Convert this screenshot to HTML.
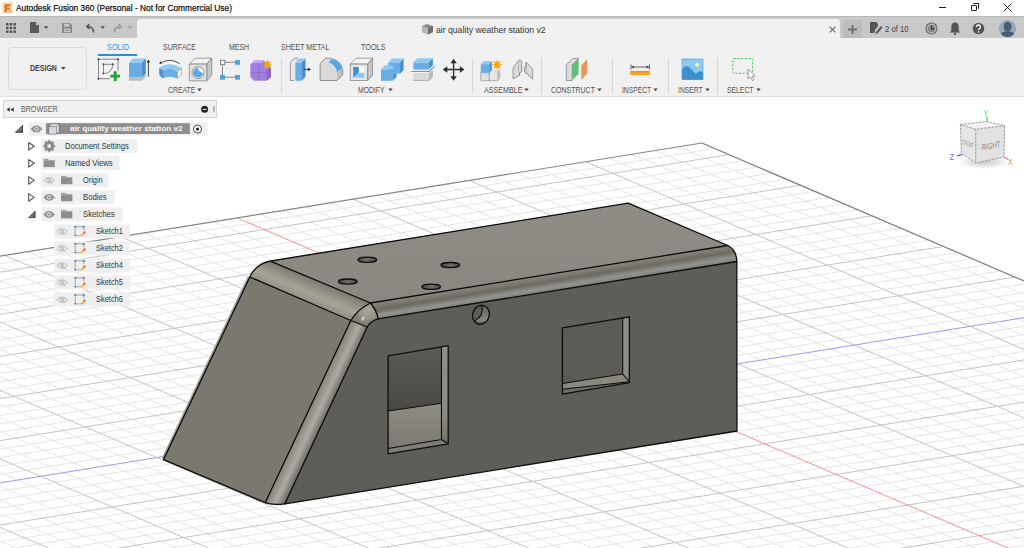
<!DOCTYPE html>
<html><head><meta charset="utf-8">
<style>
*{margin:0;padding:0;box-sizing:border-box}
html,body{width:1024px;height:548px;overflow:hidden;background:#fff;font-family:"Liberation Sans",sans-serif}
.a{position:absolute}
#title{left:0;top:0;width:1024px;height:16px;background:#fff}
#tabbar{left:0;top:16px;width:1024px;height:22px;background:#c9c9c9;border-top:1px solid #b8b8b8}
#toolbar{left:0;top:38px;width:1024px;height:59px;background:#f1f1f1;border-bottom:1px solid #dedede}
#vp{left:0;top:97px;width:1024px;height:451px;overflow:hidden;background:#fff}
.t{white-space:nowrap;color:#3c3c3c}
.tab{font-size:8px;color:#555;letter-spacing:-0.2px}
.grp{font-size:8px;color:#555;letter-spacing:-0.15px}
.sep{width:1px;height:36px;top:58px;background:#d8d8d8}
.mi line{stroke:#e6e6e6;stroke-width:1}
.ma line{stroke:#c4c4c4;stroke-width:1}
.bd line{stroke:#858585;stroke-width:1.2}
.br{font-size:7.6px;color:#3a3a3a}

.tx{white-space:nowrap;transform-origin:0 0}
.bold1{-webkit-text-stroke:0.25px currentColor}
</style></head><body>
<!-- title bar -->
<div id="title" class="a">
  <svg class="a" style="left:1px;top:2px" width="13" height="12"><rect x="0.8" y="0.2" width="11" height="11" fill="#fbe3c8"/><rect x="1.5" y="1" width="9.5" height="9.5" fill="#f6cf9f" opacity="0.6"/><path d="M3.6 2.2H9.6V4.2H5.9V5.6H8.9V7.5H5.9V10.3H3.6Z" fill="#d8731a"/><rect x="7.6" y="8.6" width="3" height="1.8" fill="#f0a55a"/></svg>
  <div class="a" style="left:939px;top:7px;width:7px;height:1px;background:#222"></div>
  <div class="a" style="left:971px;top:5px;width:6px;height:6px;border:1px solid #222;border-radius:1px;background:#fff"></div>
  <div class="a" style="left:973px;top:3px;width:6px;height:6px;border-top:1px solid #222;border-right:1px solid #222;border-radius:1px"></div>
  <svg class="a" style="left:1003px;top:3px" width="9" height="9"><path d="M0.5 0.5L8.5 8.5M8.5 0.5L0.5 8.5" stroke="#222" stroke-width="1"/></svg>
</div>
<!-- tab bar -->
<div id="tabbar" class="a">
  <svg class="a" style="left:6px;top:6px" width="10" height="10"><g fill="#555"><rect x="0" y="0" width="2.5" height="2.5"/><rect x="3.7" y="0" width="2.5" height="2.5"/><rect x="7.4" y="0" width="2.5" height="2.5"/><rect x="0" y="3.7" width="2.5" height="2.5"/><rect x="3.7" y="3.7" width="2.5" height="2.5"/><rect x="7.4" y="3.7" width="2.5" height="2.5"/><rect x="0" y="7.4" width="2.5" height="2.5"/><rect x="3.7" y="7.4" width="2.5" height="2.5"/><rect x="7.4" y="7.4" width="2.5" height="2.5"/></g></svg>
  <svg class="a" style="left:30px;top:5px" width="18" height="12"><path d="M0 0H6L9 3V11H0Z" fill="#5a5a5a"/><path d="M6 0V3H9Z" fill="#c9c9c9"/><path d="M13.8 4.3H18.3L16.05 7Z" fill="#555"/></svg>
  <svg class="a" style="left:62px;top:6px" width="10" height="10"><path d="M0 0H8L10 2V10H0Z" fill="#8a8a8a"/><rect x="2.2" y="0.8" width="5" height="2.8" fill="#c9c9c9"/><rect x="2" y="5.6" width="6" height="3.6" fill="#c9c9c9"/><rect x="3.2" y="6.8" width="3.6" height="1.2" fill="#8a8a8a"/></svg>
  <svg class="a" style="left:85px;top:5px" width="22" height="12"><path d="M8.5 10.5C8.5 6 6 4.5 2.5 4.5M4.5 2L1.8 4.5L4.5 7" fill="none" stroke="#555" stroke-width="1.5"/><path d="M15.5 4.3H20L17.75 7Z" fill="#555"/></svg>
  <svg class="a" style="left:113px;top:5px" width="22" height="12"><path d="M1.5 10.5C1.5 6 4 4.5 7.5 4.5M5.5 2L8.2 4.5L5.5 7" fill="none" stroke="#999" stroke-width="1.5"/><path d="M14.8 4.3H19.3L17.05 7Z" fill="#999"/></svg>
  <div class="a" style="left:137px;top:2px;width:703px;height:20px;background:#f1f1f1;border-radius:3px 3px 0 0"></div>
  <svg class="a" style="left:421px;top:7px" width="13" height="11"><path d="M1 2L6 0L12 2V8L7 10.5L1 8Z" fill="#8a8a8a"/><path d="M1 2L7 4V10.5L1 8Z" fill="#b5b5b5"/><path d="M7 4L12 2V8L7 10.5Z" fill="#6f6f6f"/></svg>
  <svg class="a" style="left:829px;top:9px" width="7" height="7"><path d="M0.6 0.6L6.4 6.4M6.4 0.6L0.6 6.4" stroke="#666" stroke-width="1.1"/></svg>
  <div class="a" style="left:843px;top:3px;width:19px;height:19px;background:#bdbdbd;border-radius:2px 2px 0 0"></div>
  <svg class="a" style="left:848px;top:8px" width="9" height="9"><path d="M4.5 0V9M0 4.5H9" stroke="#6e6e6e" stroke-width="1.9"/></svg>
  <svg class="a" style="left:870px;top:5px" width="13" height="13"><path d="M0 0H6L8 2V4L5 8L4.5 11H0Z" fill="#555"/><path d="M6 10L11 4L12.5 5.5L7.5 11.5L5.5 12Z" fill="#555"/></svg>
  <svg class="a" style="left:925px;top:5px" width="13" height="13"><circle cx="6.5" cy="6.5" r="6" fill="#5e5e5e"/><circle cx="6.5" cy="6.5" r="4.5" fill="#8a8a8a" stroke="#dcdcdc" stroke-width="0.9"/><path d="M6.5 3.4V6.9H9.3" fill="none" stroke="#333" stroke-width="1.2"/></svg>
  <svg class="a" style="left:949px;top:5px" width="12" height="13"><path d="M6 0.5C3.5 0.5 2.3 2.5 2.3 5V8.5L0.8 10.5H11.2L9.7 8.5V5C9.7 2.5 8.5 0.5 6 0.5Z" fill="#555"/><circle cx="6" cy="11.8" r="1.2" fill="#555"/></svg>
  <svg class="a" style="left:972px;top:5px" width="13" height="13"><circle cx="6.5" cy="6.5" r="5.8" fill="#555"/><path d="M4.5 5C4.5 3.6 5.4 3 6.5 3S8.5 3.6 8.5 5C8.5 6.3 6.6 6.5 6.6 8" fill="none" stroke="#fff" stroke-width="1.3"/><circle cx="6.6" cy="9.9" r="0.8" fill="#fff"/></svg>
  <svg class="a" style="left:998px;top:2px" width="19" height="19"><defs><clipPath id="av"><circle cx="9.5" cy="9.5" r="8.6"/></clipPath></defs><circle cx="9.5" cy="9.5" r="8.6" fill="#94a8bf"/><g clip-path="url(#av)" fill="#4c5b6e"><ellipse cx="9.6" cy="7.6" rx="4" ry="4.9"/><path d="M1.5 19.5C1.5 14 5 12.3 9.6 12.3S17.7 14 17.7 19.5Z"/></g></svg>
</div>
<!-- toolbar -->
<div id="toolbar" class="a">
  <div class="a" style="left:8px;top:8.6px;width:79px;height:43.3px;border:1px solid #dcdcdc;border-radius:4px;background:#f1f1f1"></div>
  <svg class="a" style="left:60.5px;top:29.2px" width="6" height="4"><path d="M0 0H4.6L2.3 2.8Z" fill="#444"/></svg>
  <div class="a" style="left:98px;top:16px;width:39px;height:2px;background:#1e96d6"></div>
  <svg class="a" style="left:0;top:0" width="1024" height="59" viewBox="0 38 1024 59">
<!-- create sketch -->
<g>
<path d="M98.5 59.2H118M98.5 59.2V78.7H110M118 59.2V70.5" fill="none" stroke="#5a5a5a" stroke-width="0.7"/>
<g fill="#3a3a3a"><circle cx="98.5" cy="59.2" r="1"/><circle cx="118" cy="59.2" r="1"/><circle cx="98.5" cy="78.7" r="1"/><circle cx="103.5" cy="64.3" r="1"/><circle cx="112.9" cy="64.3" r="1"/><circle cx="103.5" cy="73.6" r="1"/></g>
<path d="M103.5 64.3H112.9M103.5 64.3V73.6M112.9 64.3Q112.5 72 105 73.6" fill="none" stroke="#5a5a5a" stroke-width="0.7"/>
<path d="M115.2 71.2V81M110.3 76.1H120.1" stroke="#1fa33a" stroke-width="2.9"/>
</g>
<!-- extrude -->
<g>
<path d="M129 77.3H141.9L145.8 73.2V76.8L141.9 80.8H129Z" fill="#bdbdbd"/>
<path d="M129 62.6H141.9V77.3H129Z" fill="#69ade4"/>
<path d="M129 62.6L133.1 58.4H145.8L141.9 62.6Z" fill="#8fcaf4"/>
<path d="M141.9 62.6L145.8 58.4V73.2L141.9 77.3Z" fill="#4a90d0"/>
<path d="M148.4 76.7V61.5" stroke="#333" stroke-width="0.9"/><path d="M146.4 62.5L148.4 59.5L150.4 62.5Z" fill="#333"/>
</g>
<!-- revolve -->
<g>
<path d="M160.5 63.2Q170 57 179.9 63.8" fill="none" stroke="#444" stroke-width="0.9"/><path d="M159.3 64L160.2 61.3L162.3 63.2Z" fill="#333"/>
<path d="M159.1 67.9Q169.6 60.5 181.4 68.2L177.3 71.7Q170 66.5 163.8 70.8Z" fill="#8ccaf6"/>
<path d="M163.8 70.8Q170 66.5 177.3 71.7V78.4Q170 75 162.6 78.4Z" fill="#69ade4"/>
<path d="M159.1 67.9L163.8 70.8L162.6 78.4L159.3 75Z" fill="#4a90d0"/>
<path d="M177.3 71.7L181.4 68.2V75L177.3 78.4Z" fill="#fff" stroke="#777" stroke-width="0.6"/>
</g>
<!-- hole -->
<g stroke="#7a7a7a" stroke-width="0.7">
<path d="M189.3 64.1L195.4 58.2H211.8L206.8 64.1Z" fill="#f4f4f4"/>
<path d="M206.8 64.1L211.8 58.2V74.9L206.8 80.8Z" fill="#c9c9c9"/>
<path d="M189.3 64.1H206.8V80.8H189.3Z" fill="#e2e2e2"/>
<circle cx="198.1" cy="72.5" r="6.1" fill="#ececec" stroke="#8a8a8a" stroke-width="0.8"/>
<circle cx="198.1" cy="72.5" r="5.1" fill="#62a8e4" stroke="none"/>
<path d="M197.6 67.4Q199.5 72.5 203.1 72.9Q203.4 68.2 197.6 67.4Z" fill="#fff" stroke="none"/>
</g>
<!-- pattern -->
<g>
<path d="M225 62.3H235M222.4 64.7V75M225 77.2H235" stroke="#777" stroke-width="0.9"/>
<rect x="220.4" y="60.3" width="4.4" height="4.4" fill="#fff" stroke="#666" stroke-width="0.8"/>
<rect x="235" y="60" width="5" height="4.8" fill="#4da3e0"/>
<rect x="220" y="74.9" width="5" height="4.8" fill="#4da3e0"/>
<rect x="235" y="74.9" width="5" height="4.8" fill="#4da3e0"/>
</g>
<!-- form -->
<g>
<path d="M254 60.5H264L270 66V78L266.5 80.8H254L250.3 77V64.5Z" fill="#a27ee0"/>
<path d="M254 60.5H264L262 63H253L250.3 64.5Z" fill="#c6a8f5"/>
<path d="M266.5 66L271 67V77L266.5 80.8Z" fill="#8a64cc"/>
<path d="M258.5 63V80.8M250.5 72.5H266.5" stroke="#8a66c8" stroke-width="0.6"/>
<path d="M267.4 58.8L268.3 62.3L271.6 61.1L269.5 63.9L272.8 64.9L269.5 65.9L271.4 68.8L268.3 67.5L267.4 70.6L266.5 67.5L263.4 68.8L265.3 65.9L262 64.9L265.3 63.9L263.2 61.1L266.5 62.3Z" fill="#f5a50a"/>
</g>
<!-- press pull -->
<g>
<path d="M290.3 80.5V62.6L294.4 58.2H298L295.3 62.6V80.5Z" fill="#e8e8e8"/>
<path d="M293.8 80.5H290.3V62.6L294.4 58.2H297.9" fill="none" stroke="#6a6a6a" stroke-width="0.7"/>
<path d="M295.3 62.6H301.4V80.8H295.3Z" fill="#69ade4"/>
<path d="M295.3 62.6L298.5 58.5H305.5L301.4 62.6Z" fill="#8fcaf4"/>
<path d="M301.4 62.6L305.5 58.5V76.7L301.4 80.8Z" fill="#4a90d0"/>
<path d="M303.7 69.4H308.5" stroke="#222" stroke-width="0.9"/><path d="M308 67.5L310.8 69.4L308 71.3Z" fill="#222"/>
</g>
<!-- fillet -->
<g>
<path d="M320.1 80.5V63.8L325.4 58.2H331.3Q340 60 342.7 67.6V74.9L337.1 80.5Z" fill="#dadada"/>
<path d="M337.1 80.5L342.7 74.9V69L337.1 72Z" fill="#c2c2c2"/>
<path d="M328.6 62.6L331.9 58.3Q340.5 61 342.7 68L337.1 72Q335 64 328.6 62.6Z" fill="#5aa6e4"/>
<path d="M331.3 58.2H325.4L320.1 63.8V80.5H337.1L342.7 74.9V69" fill="none" stroke="#6a6a6a" stroke-width="0.7"/>
</g>
<!-- shell -->
<g stroke="#7a7a7a" stroke-width="0.7">
<path d="M350.3 64.1L356.1 58.2H372.5L367.6 64.1Z" fill="#f6f6f6"/>
<path d="M367.6 64.1L372.5 58.2V75.2L367.6 80.5Z" fill="#c8c8c8"/>
<path d="M350.3 64.1H367.6V80.5H350.3Z" fill="#e6e6e6"/>
<path d="M353.2 67H364.3V77.8H353.2Z" fill="#fafafa" stroke="none"/>
<path d="M353.2 67H358.8V72.7L353.2 77.8Z" fill="#3f8fd0" stroke="none"/>
<path d="M358.8 72.7H364.3V77.8H353.2Z" fill="#8cc8f4" stroke="none"/>
</g>
<!-- combine -->
<g>
<path d="M388.3 62.5L392 58.5H403.6L400 62.5Z" fill="#8fcaf4"/>
<path d="M388.3 62.5H400V73.7H388.3Z" fill="#69ade4"/>
<path d="M400 62.5L403.6 58.5V70L400 73.7Z" fill="#4a90d0"/>
<path d="M381 69.5L384.5 65.3H393L392.8 69.5Z" fill="#8fcaf4"/>
<path d="M381 69.5H392.8V80.8H381Z" fill="#69ade4"/>
<path d="M392.8 73.7H396.6V77L392.8 80.8Z" fill="#4a90d0"/>
<path d="M388.3 69.5H396.6V73.7H388.3Z" fill="#69ade4"/>
</g>
<!-- split -->
<g>
<path d="M413.3 62.6L417.4 58.2H432.9L428.5 62.6Z" fill="#8fcaf4"/>
<path d="M413.3 62.6H428.5V69.6H413.3Z" fill="#69ade4"/>
<path d="M428.5 62.6L432.9 58.2V65.2L428.5 69.6Z" fill="#4a90d0"/>
<path d="M411.3 71.5H429.1L434.8 66.1" fill="none" stroke="#4da3e0" stroke-width="1.1"/>
<path d="M413.3 73.1H428.8V80.4H413.3Z" fill="#d9d9d9"/>
<path d="M428.8 73.1L432.9 70V76.6L428.8 80.4Z" fill="#bbbbbb"/>
<path d="M413.3 80.4H428.8L432.9 76.6" fill="none" stroke="#999" stroke-width="0.8"/>
</g>
<!-- move -->
<g fill="#2b2b2b">
<path d="M444.5 69.5H462.7M453.6 60.5V78.8" stroke="#2b2b2b" stroke-width="1.3"/>
<path d="M453.6 58.8L456.8 63.3H450.4Z"/><path d="M453.6 80.7L456.8 76.2H450.4Z"/>
<path d="M442.8 69.5L447.3 66.3V72.7Z"/><path d="M464.4 69.5L459.9 66.3V72.7Z"/>
</g>
<!-- new component -->
<g>
<path d="M480.7 72.8H489.3V80.7H480.7Z" fill="#e0e0e0" stroke="#8a8a8a" stroke-width="0.6"/>
<path d="M489.3 72.8V70.6H497.9V80.7H489.3Z" fill="#e6e6e6" stroke="#8a8a8a" stroke-width="0.6"/>
<path d="M489.3 70.6L491.8 68.6H500.5L497.9 70.6Z" fill="#f2f2f2"/>
<path d="M497.9 70.6L500.5 68.6V78L497.9 80.7Z" fill="#c3c3c3"/>
<path d="M480.7 64.2L483.6 61H491.8L489.3 64.2Z" fill="#8fcaf4"/>
<path d="M480.7 64.2H489.3V72.8H480.7Z" fill="#69ade4"/>
<path d="M489.3 64.2L491.8 61V69.9L489.3 72.8Z" fill="#4a90d0"/>
<path d="M497.2 58.7L498.1 62.2L501.4 61L499.3 63.8L502.6 64.8L499.3 65.8L501.2 68.7L498.1 67.4L497.2 70.5L496.3 67.4L493.2 68.7L495.1 65.8L491.8 64.8L495.1 63.8L493 61L496.3 62.2Z" fill="#f5a50a"/>
</g>
<!-- joint -->
<g stroke="#7a7a7a" stroke-width="0.7" fill="#dadada">
<path d="M513 68L518.5 60.5Q521 59.5 521.6 61V72L519.5 73V75.5L513 79Z"/>
<path d="M518.5 61.5V72.5" stroke="#aaa"/>
<path d="M526 62L532.7 69V79.2L528 75V74L524.3 72V67.5L526 66Z"/>
<path d="M526 62V74.5" stroke="#aaa"/>
<path d="M519.6 72.5V76" stroke="#4da3e0" stroke-width="0.9"/><path d="M525.8 65V68" stroke="#4da3e0" stroke-width="0.9"/>
</g>
<!-- construct -->
<g>
<path d="M566.3 80.5V64.9L572.7 58.4H578.6L572.2 64.9V80.5Z" fill="#dcdcdc" stroke="#777" stroke-width="0.7"/>
<path d="M572.2 64.9L578.6 59V74L572.2 79.9Z" fill="#5cbf7a"/>
<path d="M581.3 65.4L587.2 59V73.5L581.3 79.9Z" fill="#e8955a"/>
</g>
<!-- inspect -->
<g>
<path d="M631 64.4V69.7M649.5 64.4V69.7M631.5 67H649" stroke="#444" stroke-width="0.8"/>
<path d="M631.3 67L634 65.6V68.4Z" fill="#444"/><path d="M649.2 67L646.5 65.6V68.4Z" fill="#444"/>
<rect x="630.2" y="71.1" width="19.9" height="4" fill="#f5a623"/>
<path d="M632 71.1V72.5M634 71.1V72.2M636 71.1V72.5M638 71.1V72.2M640 71.1V72.5M642 71.1V72.2M644 71.1V72.5M646 71.1V72.2M648 71.1V72.5" stroke="#8a5a10" stroke-width="0.5"/>
</g>
<!-- insert -->
<g>
<rect x="682" y="59" width="21" height="20.7" fill="#8ccaf6"/>
<path d="M682 79.7V70Q685.5 64 689 67Q693 71 696 74Q699 69.5 703 72.5V79.7Z" fill="#3d8fcc"/>
<circle cx="697" cy="64.7" r="2" fill="#fff6b0"/>
<rect x="682" y="59" width="21" height="20.7" fill="none" stroke="#4a9ad8" stroke-width="0.6"/>
</g>
<!-- select -->
<g>
<rect x="732.8" y="58.5" width="19.8" height="14.8" fill="none" stroke="#4cc469" stroke-width="1" stroke-dasharray="2.2 1.5" rx="0.8"/>
<path d="M748 69L748 79L750.5 76.8L752.5 80.6L754 79.8L752.2 76.2L755.2 76Z" fill="#fff" stroke="#777" stroke-width="0.7"/>
</g>
</svg>

  <svg class="a" style="left:0;top:0" width="1024" height="59"><g fill="#444"><path d="M197.3 50.5h4.4l-2.2 2.8z"/><path d="M388.3 50.5h4.4l-2.2 2.8z"/><path d="M524.3 50.5h4.4l-2.2 2.8z"/><path d="M597.3 50.5h4.4l-2.2 2.8z"/><path d="M653.3 50.5h4.4l-2.2 2.8z"/><path d="M705.3 50.5h4.4l-2.2 2.8z"/><path d="M756.3 50.5h4.4l-2.2 2.8z"/></g></svg>
  <div class="a sep" style="left:281px;top:20px"></div>
  <div class="a sep" style="left:472px;top:20px"></div>
  <div class="a sep" style="left:541px;top:20px"></div>
  <div class="a sep" style="left:612px;top:20px"></div>
  <div class="a sep" style="left:668px;top:20px"></div>
  <div class="a sep" style="left:717px;top:20px"></div>
</div>
<!-- viewport -->
<div id="vp" class="a">
<svg class="a" style="left:0;top:-97px" width="1024" height="548" viewBox="0 0 1024 548">
<g class="mi"><line x1="714.7" y1="148.5" x2="-795.9" y2="392.1"/><line x1="743.3" y1="160.7" x2="-767.3" y2="404.3"/><line x1="757.6" y1="166.8" x2="-753.0" y2="410.5"/><line x1="771.9" y1="173.0" x2="-738.7" y2="416.6"/><line x1="786.2" y1="179.1" x2="-724.4" y2="422.7"/><line x1="814.8" y1="191.3" x2="-695.8" y2="434.9"/><line x1="829.1" y1="197.4" x2="-681.5" y2="441.1"/><line x1="843.4" y1="203.6" x2="-667.2" y2="447.2"/><line x1="857.7" y1="209.7" x2="-652.9" y2="453.3"/><line x1="886.3" y1="221.9" x2="-624.3" y2="465.6"/><line x1="900.6" y1="228.1" x2="-610.0" y2="471.7"/><line x1="914.9" y1="234.2" x2="-595.7" y2="477.8"/><line x1="929.2" y1="240.3" x2="-581.4" y2="483.9"/><line x1="957.8" y1="252.5" x2="-552.8" y2="496.2"/><line x1="972.1" y1="258.7" x2="-538.5" y2="502.3"/><line x1="986.4" y1="264.8" x2="-524.2" y2="508.4"/><line x1="1000.7" y1="270.9" x2="-509.9" y2="514.5"/><line x1="1029.3" y1="283.2" x2="-481.3" y2="526.8"/><line x1="1043.6" y1="289.3" x2="-467.0" y2="532.9"/><line x1="1057.9" y1="295.4" x2="-452.7" y2="539.0"/><line x1="1072.2" y1="301.5" x2="-438.4" y2="545.1"/><line x1="1100.8" y1="313.8" x2="-409.8" y2="557.4"/><line x1="1115.1" y1="319.9" x2="-395.5" y2="563.5"/><line x1="1129.4" y1="326.0" x2="-381.2" y2="569.6"/><line x1="1143.7" y1="332.1" x2="-366.9" y2="575.7"/><line x1="1172.3" y1="344.4" x2="-338.3" y2="588.0"/><line x1="1186.6" y1="350.5" x2="-324.0" y2="594.1"/><line x1="1200.9" y1="356.6" x2="-309.7" y2="600.2"/><line x1="1215.2" y1="362.7" x2="-295.4" y2="606.4"/><line x1="1243.8" y1="375.0" x2="-266.8" y2="618.6"/><line x1="1258.1" y1="381.1" x2="-252.5" y2="624.7"/><line x1="1272.4" y1="387.2" x2="-238.2" y2="630.8"/><line x1="1286.7" y1="393.3" x2="-223.9" y2="637.0"/><line x1="1315.3" y1="405.6" x2="-195.3" y2="649.2"/><line x1="1329.6" y1="411.7" x2="-181.0" y2="655.3"/><line x1="1343.9" y1="417.8" x2="-166.7" y2="661.5"/><line x1="1358.2" y1="424.0" x2="-152.4" y2="667.6"/><line x1="1386.8" y1="436.2" x2="-123.8" y2="679.8"/><line x1="1401.1" y1="442.3" x2="-109.5" y2="685.9"/><line x1="1415.4" y1="448.4" x2="-95.2" y2="692.1"/><line x1="1429.7" y1="454.6" x2="-80.9" y2="698.2"/><line x1="1458.3" y1="466.8" x2="-52.3" y2="710.4"/><line x1="1472.6" y1="472.9" x2="-38.0" y2="716.6"/><line x1="1486.9" y1="479.1" x2="-23.7" y2="722.7"/><line x1="1501.2" y1="485.2" x2="-9.4" y2="728.8"/><line x1="1529.8" y1="497.4" x2="19.2" y2="741.0"/><line x1="1544.1" y1="503.5" x2="33.5" y2="747.2"/><line x1="1558.4" y1="509.7" x2="47.8" y2="753.3"/><line x1="1572.7" y1="515.8" x2="62.1" y2="759.4"/><line x1="1601.3" y1="528.0" x2="90.7" y2="771.7"/><line x1="1615.6" y1="534.2" x2="105.0" y2="777.8"/><line x1="1629.9" y1="540.3" x2="119.3" y2="783.9"/><line x1="1644.2" y1="546.4" x2="133.6" y2="790.0"/><line x1="1672.8" y1="558.6" x2="162.2" y2="802.3"/><line x1="1687.1" y1="564.8" x2="176.5" y2="808.4"/><line x1="1701.4" y1="570.9" x2="190.8" y2="814.5"/><line x1="1715.7" y1="577.0" x2="205.1" y2="820.6"/><line x1="678.6" y1="146.7" x2="1706.8" y2="586.9"/><line x1="655.4" y1="150.5" x2="1683.5" y2="590.6"/><line x1="632.1" y1="154.2" x2="1660.3" y2="594.4"/><line x1="608.9" y1="158.0" x2="1637.0" y2="598.1"/><line x1="562.4" y1="165.4" x2="1590.6" y2="605.6"/><line x1="539.2" y1="169.2" x2="1567.3" y2="609.4"/><line x1="515.9" y1="172.9" x2="1544.1" y2="613.1"/><line x1="492.7" y1="176.7" x2="1520.8" y2="616.9"/><line x1="446.2" y1="184.2" x2="1474.4" y2="624.4"/><line x1="423.0" y1="187.9" x2="1451.1" y2="628.1"/><line x1="399.7" y1="191.7" x2="1427.9" y2="631.9"/><line x1="376.5" y1="195.4" x2="1404.6" y2="635.6"/><line x1="330.0" y1="202.9" x2="1358.2" y2="643.1"/><line x1="306.8" y1="206.7" x2="1334.9" y2="646.8"/><line x1="283.5" y1="210.4" x2="1311.7" y2="650.6"/><line x1="260.3" y1="214.2" x2="1288.4" y2="654.3"/><line x1="213.8" y1="221.7" x2="1242.0" y2="661.8"/><line x1="190.6" y1="225.4" x2="1218.7" y2="665.6"/><line x1="167.3" y1="229.2" x2="1195.5" y2="669.3"/><line x1="144.1" y1="232.9" x2="1172.2" y2="673.1"/><line x1="97.6" y1="240.4" x2="1125.8" y2="680.6"/><line x1="74.4" y1="244.2" x2="1102.5" y2="684.3"/><line x1="51.1" y1="247.9" x2="1079.3" y2="688.1"/><line x1="27.9" y1="251.7" x2="1056.0" y2="691.8"/><line x1="-18.6" y1="259.1" x2="1009.6" y2="699.3"/><line x1="-41.8" y1="262.9" x2="986.3" y2="703.1"/><line x1="-65.1" y1="266.6" x2="963.1" y2="706.8"/><line x1="-88.3" y1="270.4" x2="939.8" y2="710.6"/><line x1="-134.8" y1="277.9" x2="893.4" y2="718.1"/><line x1="-158.0" y1="281.6" x2="870.1" y2="721.8"/><line x1="-181.3" y1="285.4" x2="846.9" y2="725.6"/><line x1="-204.5" y1="289.1" x2="823.6" y2="729.3"/><line x1="-251.0" y1="296.6" x2="777.2" y2="736.8"/><line x1="-274.2" y1="300.4" x2="753.9" y2="740.5"/><line x1="-297.5" y1="304.1" x2="730.7" y2="744.3"/><line x1="-320.7" y1="307.9" x2="707.4" y2="748.0"/><line x1="-367.2" y1="315.4" x2="661.0" y2="755.5"/><line x1="-390.4" y1="319.1" x2="637.7" y2="759.3"/><line x1="-413.7" y1="322.9" x2="614.5" y2="763.0"/><line x1="-436.9" y1="326.6" x2="591.2" y2="766.8"/><line x1="-483.4" y1="334.1" x2="544.8" y2="774.3"/><line x1="-506.7" y1="337.9" x2="521.5" y2="778.0"/><line x1="-529.9" y1="341.6" x2="498.3" y2="781.8"/><line x1="-553.1" y1="345.4" x2="475.0" y2="785.5"/><line x1="-599.6" y1="352.8" x2="428.6" y2="793.0"/><line x1="-622.9" y1="356.6" x2="405.3" y2="796.8"/><line x1="-646.1" y1="360.3" x2="382.1" y2="800.5"/><line x1="-669.3" y1="364.1" x2="358.8" y2="804.3"/><line x1="-715.8" y1="371.6" x2="312.4" y2="811.8"/><line x1="-739.0" y1="375.3" x2="289.1" y2="815.5"/><line x1="-762.3" y1="379.1" x2="265.9" y2="819.3"/><line x1="-785.5" y1="382.8" x2="242.6" y2="823.0"/></g>
<g class="ma"><line x1="729.0" y1="154.6" x2="-781.6" y2="398.2"/><line x1="800.5" y1="185.2" x2="-710.1" y2="428.8"/><line x1="872.0" y1="215.8" x2="-638.6" y2="459.4"/><line x1="943.5" y1="246.4" x2="-567.1" y2="490.0"/><line x1="1015.0" y1="277.0" x2="-495.6" y2="520.6"/><line x1="1158.0" y1="338.3" x2="-352.6" y2="581.9"/><line x1="1229.5" y1="368.9" x2="-281.1" y2="612.5"/><line x1="1301.0" y1="399.5" x2="-209.6" y2="643.1"/><line x1="1372.5" y1="430.1" x2="-138.1" y2="673.7"/><line x1="1444.0" y1="460.7" x2="-66.6" y2="704.3"/><line x1="1515.5" y1="491.3" x2="4.9" y2="734.9"/><line x1="1587.0" y1="521.9" x2="76.4" y2="765.5"/><line x1="1658.5" y1="552.5" x2="147.9" y2="796.1"/><line x1="1730.0" y1="583.1" x2="219.4" y2="826.8"/><line x1="701.8" y1="143.0" x2="1730.0" y2="583.1"/><line x1="585.6" y1="161.7" x2="1613.8" y2="601.9"/><line x1="469.4" y1="180.4" x2="1497.6" y2="620.6"/><line x1="353.2" y1="199.2" x2="1381.4" y2="639.4"/><line x1="120.8" y1="236.7" x2="1149.0" y2="676.8"/><line x1="4.6" y1="255.4" x2="1032.8" y2="695.6"/><line x1="-111.6" y1="274.1" x2="916.6" y2="714.3"/><line x1="-227.8" y1="292.9" x2="800.4" y2="733.1"/><line x1="-344.0" y1="311.6" x2="684.2" y2="751.8"/><line x1="-460.2" y1="330.4" x2="568.0" y2="770.5"/><line x1="-576.4" y1="349.1" x2="451.8" y2="789.3"/><line x1="-692.6" y1="367.8" x2="335.6" y2="808.0"/><line x1="-808.8" y1="386.6" x2="219.4" y2="826.8"/></g>
<g class="bd"><line x1="701.8" y1="143.0" x2="-808.8" y2="386.6"/><line x1="701.8" y1="143.0" x2="1730.0" y2="583.1"/></g>
<line x1="237.0" y1="217.9" x2="1265.2" y2="658.1" stroke="#f39191"/>
<line x1="1086.5" y1="307.6" x2="-424.1" y2="551.3" stroke="#9a9af2"/>
<defs>
<linearGradient id="gTop" x1="0" y1="0" x2="0" y2="1"><stop offset="0" stop-color="#908d86"/><stop offset="1" stop-color="#8a8780"/></linearGradient>
<linearGradient id="gFa" gradientUnits="userSpaceOnUse" x1="300" y1="273.6" x2="291.1" y2="294.8"><stop offset="0" stop-color="#7e7a71"/><stop offset="0.62" stop-color="#a7a397"/><stop offset="1" stop-color="#949087"/></linearGradient>
<linearGradient id="gFb" gradientUnits="userSpaceOnUse" x1="500" y1="282.2" x2="502.7" y2="298.8"><stop offset="0" stop-color="#8b887f"/><stop offset="0.45" stop-color="#6c6961"/><stop offset="0.78" stop-color="#93948f"/><stop offset="1" stop-color="#80807b"/></linearGradient>
<linearGradient id="gFc" gradientUnits="userSpaceOnUse" x1="313.5" y1="400" x2="329.6" y2="407.6"><stop offset="0" stop-color="#86837b"/><stop offset="0.55" stop-color="#aeaba2"/><stop offset="1" stop-color="#6f6d67"/></linearGradient>
<linearGradient id="gBack1" x1="0" y1="0" x2="0" y2="1"><stop offset="0" stop-color="#5d5b56"/><stop offset="1" stop-color="#4a4844"/></linearGradient>
<linearGradient id="gFloor1" x1="0" y1="0" x2="0" y2="1"><stop offset="0" stop-color="#8f8c83"/><stop offset="1" stop-color="#7c7971"/></linearGradient>
<radialGradient id="gBl" gradientUnits="userSpaceOnUse" cx="368" cy="310" r="14"><stop offset="0" stop-color="#a8a59b"/><stop offset="0.6" stop-color="#97948a"/><stop offset="1" stop-color="#7f7c74"/></radialGradient>
<radialGradient id="gHl"><stop offset="0" stop-color="#f4f3ee" stop-opacity="0.95"/><stop offset="1" stop-color="#f4f3ee" stop-opacity="0"/></radialGradient>
<linearGradient id="gRw" x1="0" y1="0" x2="0" y2="1"><stop offset="0" stop-color="#8f8f8b"/><stop offset="0.7" stop-color="#8a8a86"/><stop offset="1" stop-color="#73726d"/></linearGradient>
<linearGradient id="gCi" x1="0" y1="0" x2="0" y2="1"><stop offset="0" stop-color="#62605b"/><stop offset="1" stop-color="#8e8a80"/></linearGradient>
<linearGradient id="gHole" x1="0" y1="0" x2="1" y2="0"><stop offset="0" stop-color="#4c4b49"/><stop offset="0.5" stop-color="#6e6d6a"/><stop offset="1" stop-color="#4c4b49"/></linearGradient>
</defs>
<g stroke-linejoin="round">
<!-- silhouette base -->
<path d="M163.5 459.6 L249.8 277 Q256 264 269.6 261.1 L628.2 203.2 L727.8 245.5 Q736.5 250 736.8 261.5 L737 431 L284.9 503.8 Q272 505.5 265.2 502.7 Z" fill="#5f5d58"/>
<!-- slanted face -->
<path d="M163.5 459.6 L249.8 277 L350.8 320.5 L265.2 502.7 Z" fill="#7b7870"/>
<!-- top face -->
<path d="M271.5 261.7 L628.2 203.2 L727.8 245.5 L370.5 303 Z" fill="url(#gTop)"/>
<!-- fillet a -->
<path d="M249.8 277 Q256 264 271.5 261.7 L370.5 303 L350.8 320.5 Z" fill="url(#gFa)"/>
<!-- fillet b -->
<path d="M370.5 303 L727.8 245.5 Q736.5 250 736.8 261.5 L378.1 318.8 Z" fill="url(#gFb)"/>
<!-- fillet c -->
<path d="M350.8 320.5 L367.2 327 L284.9 503.8 Q272 505.5 265.2 502.7 Z" fill="url(#gFc)"/>
<!-- corner blend -->
<path d="M370.5 303 Q377 311 378.1 318.8 Q370 321 367.2 327 L350.8 320.5 Q358 309 370.5 303 Z" fill="url(#gBl)"/>
<ellipse cx="363" cy="318.5" rx="3.6" ry="1.7" fill="url(#gHl)" transform="rotate(-55 363 318.5)"/>
<!-- windows -->
<path d="M388.1 355.9 L448.2 345.7 L448.2 443.8 L388.1 453.8 Z" fill="#7f7d77"/>
<path d="M388.1 355.9 L441.5 346.9 L441.5 403.2 L388.1 411 Z" fill="url(#gBack1)"/>
<path d="M388.1 411 L441.5 403.2 L441.5 439.5 L388.1 448.5 Z" fill="url(#gFloor1)"/>
<path d="M441.5 346.9 L448.2 345.7 L448.2 443.8 L441.5 439.5 Z" fill="url(#gRw)"/>
<path d="M562.4 327.8 L629.4 316.9 L629.4 382.6 L562.4 394.1 Z" fill="#6f6d67"/>
<path d="M562.4 327.8 L622.7 318 L622.7 374 L562.4 383.5 Z" fill="#5c5a55"/>
<path d="M562.4 383.5 L622.7 374 L629.4 381.7 L562.4 389.3 Z" fill="#8a877f"/>
<path d="M622.7 318 L629.4 316.9 L629.4 381.7 L622.7 374 Z" fill="#8b8b87"/>
<!-- holes -->
<ellipse cx="367.3" cy="259.8" rx="9.3" ry="2.6" fill="url(#gHole)"/>
<ellipse cx="347.8" cy="281.6" rx="9.3" ry="2.6" fill="url(#gHole)"/>
<ellipse cx="450.3" cy="265.1" rx="9.3" ry="2.6" fill="url(#gHole)"/>
<ellipse cx="431.2" cy="286.8" rx="9.3" ry="2.6" fill="url(#gHole)"/>
<ellipse cx="481" cy="314.8" rx="8.3" ry="9.6" fill="#5f5d58" transform="rotate(20 481 314.8)"/>
<path d="M481.7 305.2 Q489.5 307.5 489.2 315.5 Q487 324.5 475.3 320.5 Q484 316 481.7 305.2 Z" fill="url(#gCi)"/>
</g>
<path d="M162.6 458.6 L248.6 276.6" stroke="#a3a09a" stroke-width="2"/>
<g fill="none" stroke="#0c0c0c" stroke-width="1.3" stroke-linejoin="round" stroke-linecap="round">
<path d="M163.5 459.6 L249.8 277 Q256 264 269.6 261.1 L628.2 203.2 L727.8 245.5 Q736.5 250 736.8 261.5 L737 431 L284.9 503.8 Q272 505.5 265.2 502.7 Z"/>
<path d="M271.5 261.7 L370.5 303 L727.8 245.5"/>
<path d="M249.8 277 L350.8 320.5 L265.2 502.7"/>
<path d="M370.5 303 Q377 311 378.1 318.8 L736.8 261.5"/>
<path d="M350.8 320.5 Q358 309 370.5 303"/>
<path d="M350.8 320.5 L367.2 327"/>
<path d="M378.1 318.8 Q370 321 367.2 327 L284.9 503.8"/>
<path d="M388.1 355.9 L448.2 345.7 L448.2 443.8 L388.1 453.8 Z"/>
<path d="M388.1 411 L441.5 403.2 M441.5 346.9 L441.5 439.5 L448.2 443.8 M388.1 448.5 L441.5 439.5" stroke-width="1.1"/>
<path d="M562.4 327.8 L629.4 316.9 L629.4 382.6 L562.4 394.1 Z"/>
<path d="M622.7 318 L622.7 374 L629.4 381.7 M562.4 383.5 L622.7 374 M562.4 389.3 L629.4 381.7" stroke-width="1.1"/>
<ellipse cx="367.3" cy="259.8" rx="9.3" ry="2.6"/>
<ellipse cx="347.8" cy="281.6" rx="9.3" ry="2.6"/>
<ellipse cx="450.3" cy="265.1" rx="9.3" ry="2.6"/>
<ellipse cx="431.2" cy="286.8" rx="9.3" ry="2.6"/>
<ellipse cx="481" cy="314.8" rx="8.3" ry="9.6" transform="rotate(20 481 314.8)"/>
<path d="M481.7 305.2 Q484 316 475.3 320.5" stroke-width="1.1"/>
</g>

</svg>
</div>
<svg class="a" style="left:940px;top:100px" width="84" height="75" viewBox="940 100 84 75">
<defs><radialGradient id="cs" cx="0.5" cy="0.5" r="0.5"><stop offset="0" stop-color="#000" stop-opacity="0.22"/><stop offset="1" stop-color="#000" stop-opacity="0"/></radialGradient></defs>
<ellipse cx="984" cy="162" rx="26" ry="7" fill="url(#cs)"/>
<path d="M960.4 124.5L987.1 121.5L1004.6 125.7L975.7 129.3Z" fill="#f2f2f2"/>
<path d="M960.4 124.5L975.7 129.3V163L961.3 153.4Z" fill="#e6e6e6"/>
<path d="M975.7 129.3L1004.6 125.7L1004 157L975.7 163Z" fill="#e2e2e2"/>
<g fill="none" stroke="#8e8e8e" stroke-width="0.85" stroke-dasharray="2.6 1.1"><path d="M960.4 124.5L987.1 121.5L1004.6 125.7L975.7 129.3Z"/><path d="M960.4 124.5L961.3 153.4L975.7 163L1004 157L1004.6 125.7M975.7 129.3V163"/></g>
<text x="0" y="0" font-family="Liberation Sans" font-size="8.6" fill="#858585" transform="translate(981.8 150.2) skewY(-9) scale(0.69 1)">RIGHT</text>
<text x="0" y="0" font-family="Liberation Sans" font-size="7.6" fill="#949494" transform="translate(962.6 144.6) skewY(20) scale(0.43 1)">FRONT</text>
<path d="M986.9 122V116.5" stroke="#52c952" stroke-width="1.3"/>
<text x="983.4" y="116.2" font-family="Liberation Sans" font-size="9" fill="#63d163" transform="translate(983.4 0) scale(0.8 1) translate(-983.4 0)">Y</text>
<path d="M957 155.8L961.9 154.6" stroke="#5a5af0" stroke-width="1.2"/>
<text x="949.6" y="159.6" font-family="Liberation Sans" font-size="9" fill="#6b6bf2" transform="translate(949.6 0) scale(0.85 1) translate(-949.6 0)">Z</text>
<path d="M1004 157L1008.2 159.6" stroke="#f07070" stroke-width="1.2"/>
<text x="1007.8" y="165" font-family="Liberation Sans" font-size="9" fill="#f07a7a" transform="translate(1007.8 0) scale(0.85 1) translate(-1007.8 0)">X</text>
</svg>
<svg class="a" style="left:0;top:97px" width="225" height="215" viewBox="0 97 225 215">
<defs><symbol id="eye" viewBox="0 0 12 7.6"><path d="M0 3.8Q6 -3.6 12 3.8Q6 11.2 0 3.8Z" fill="#939393"/><circle cx="6" cy="3.8" r="1.75" fill="none" stroke="#ececec" stroke-width="1.0"/></symbol>
<symbol id="eyex" viewBox="0 0 12 7"><path d="M0.6 3.5Q6 -2 11.4 3.5Q6 9 0.6 3.5Z" fill="none" stroke="#adadad" stroke-width="0.9"/><circle cx="6" cy="3.5" r="1.6" fill="none" stroke="#adadad" stroke-width="0.8"/><path d="M2.5 0L9.5 7" stroke="#adadad" stroke-width="0.9"/></symbol>
<symbol id="fold" viewBox="0 0 12 9"><path d="M0 0H5.2V1.3H0Z" fill="#9a9a9a"/><path d="M0 1.6H11.8V9H0Z" fill="#8e8e8e"/></symbol>
<symbol id="tri" viewBox="0 0 8 10"><path d="M1.2 1.2L6.8 5L1.2 8.8Z" fill="#f7f7f7" stroke="#555" stroke-width="1.1" stroke-linejoin="round"/></symbol>
<linearGradient id="tg" x1="0" y1="0" x2="1" y2="1"><stop offset="0" stop-color="#d0d0d0"/><stop offset="1" stop-color="#404040"/></linearGradient>
<symbol id="open" viewBox="0 0 9 9"><path d="M8.3 0.7V8.3H0.7Z" fill="url(#tg)" stroke="#333" stroke-width="0.9" stroke-linejoin="round"/></symbol>
<symbol id="sk" viewBox="0 0 12 11"><path d="M1 1H10M1 1V10.5H7.5M10 1V4.5" stroke="#8a8a8a" stroke-width="0.8" fill="none"/><g fill="#2e8fe0"><rect x="0" y="0" width="2" height="2"/><rect x="9" y="0" width="2" height="2"/><rect x="0" y="9.5" width="2" height="2"/></g><path d="M6.5 10.3L10 6.6L11.4 8L7.8 11.6Z" fill="#f3b12a"/><circle cx="10.9" cy="6.9" r="1.1" fill="#e8392e"/></symbol></defs>
<rect x="3.5" y="100.5" width="213" height="17" fill="#f0f0f0" stroke="#d3d3d3" stroke-width="1"/>
<path d="M6.6 109.5L9.8 107.3V111.7Z M10.5 109.5L13.7 107.3V111.7Z" fill="#333"/>
<circle cx="204.6" cy="109.3" r="3.5" fill="#222"/><rect x="202.6" y="108.8" width="4" height="1.1" fill="#ddd"/>
<path d="M213 105.3L215 107V111.5L213 113Z" fill="#b5b5b5"/>
<rect x="28.7" y="122.2" width="178.8" height="13.5" fill="#efefef"/>
<use href="#open" x="14.8" y="124.5" width="8.5" height="8.5"/>
<use href="#eye" x="30.6" y="125.2" width="11.8" height="7.5"/>
<rect x="46" y="123.2" width="143.9" height="10.8" fill="#8e8e8e"/>
<path d="M48.8 126.5L51.5 123.8H59.3V131.3L56.6 134H48.8Z" fill="#e8e8e8" stroke="#555" stroke-width="0.7"/><path d="M48.8 126.5H56.6V134M56.6 126.5L59.3 123.8" fill="none" stroke="#555" stroke-width="0.6"/><path d="M49.3 127H56.2V133.5H49.3Z" fill="#d6d9de"/>
<circle cx="197.5" cy="129.1" r="4" fill="#fff" stroke="#333" stroke-width="0.9"/><circle cx="197.5" cy="129.1" r="1.6" fill="#222"/>
<rect x="41.4" y="139.2" width="95.5" height="13.8" fill="#efefef"/>
<rect x="41.4" y="156.2" width="78.1" height="13.8" fill="#efefef"/>
<rect x="41.4" y="173.3" width="67.2" height="13.8" fill="#efefef"/>
<rect x="41.4" y="190.3" width="72.9" height="13.8" fill="#efefef"/>
<rect x="41.6" y="207.4" width="81.4" height="13.8" fill="#efefef"/>
<use href="#tri" x="27.5" y="141.3" width="8" height="10"/>
<use href="#tri" x="27.5" y="158.3" width="8" height="10"/>
<use href="#tri" x="27.5" y="175.4" width="8" height="10"/>
<use href="#tri" x="27.5" y="192.4" width="8" height="10"/>
<use href="#open" x="27.8" y="210.4" width="8" height="8"/>
<path d="M54.80 146.06 L52.80 147.55 L53.16 150.02 L50.69 149.66 L49.20 151.66 L47.71 149.66 L45.24 150.02 L45.60 147.55 L43.60 146.06 L45.60 144.57 L45.24 142.10 L47.71 142.46 L49.20 140.46 L50.69 142.46 L53.16 142.10 L52.80 144.57Z" fill="#8a8a8a" stroke="#8a8a8a" stroke-width="1.3" stroke-linejoin="round"/>
<circle cx="49.2" cy="146.06" r="1.9" fill="#efefef"/>
<use href="#fold" x="43.4" y="158.5" width="11.6" height="9"/>
<use href="#eyex" x="43.2" y="177.0" width="11.8" height="6.8"/>
<use href="#fold" x="61" y="175.6" width="11.7" height="9"/>
<use href="#eye" x="43.2" y="193.6" width="11.8" height="7.5"/>
<use href="#fold" x="61" y="192.6" width="11.7" height="9"/>
<use href="#eye" x="43.2" y="210.7" width="11.8" height="7.5"/>
<use href="#fold" x="61" y="209.7" width="11.7" height="9"/>
<rect x="54.2" y="224.5" width="75.6" height="13.8" fill="#efefef"/>
<use href="#eyex" x="56.4" y="228.0" width="11.6" height="7"/>
<use href="#sk" x="74.2" y="225.8" width="11.5" height="10.5"/>
<rect x="54.2" y="241.5" width="75.6" height="13.8" fill="#efefef"/>
<use href="#eyex" x="56.4" y="245.0" width="11.6" height="7"/>
<use href="#sk" x="74.2" y="242.8" width="11.5" height="10.5"/>
<rect x="54.2" y="258.6" width="75.6" height="13.8" fill="#efefef"/>
<use href="#eyex" x="56.4" y="262.1" width="11.6" height="7"/>
<use href="#sk" x="74.2" y="259.9" width="11.5" height="10.5"/>
<rect x="54.2" y="275.6" width="75.6" height="13.8" fill="#efefef"/>
<use href="#eyex" x="56.4" y="279.1" width="11.6" height="7"/>
<use href="#sk" x="74.2" y="276.9" width="11.5" height="10.5"/>
<rect x="54.2" y="292.7" width="75.6" height="13.8" fill="#efefef"/>
<use href="#eyex" x="56.4" y="296.2" width="11.6" height="7"/>
<use href="#sk" x="74.2" y="294.0" width="11.5" height="10.5"/>
</svg>
<div class="a tx bold1" style="left:16.4px;top:3.27px;font-size:9.6px;line-height:9.6px;font-weight:normal;color:#111;transform:scaleX(0.871)">Autodesk Fusion 360 (Personal - Not for Commercial Use)</div>
<div class="a tx" style="left:436px;top:24.87px;font-size:9.6px;line-height:9.6px;font-weight:normal;color:#333;transform:scaleX(0.901)">air quality weather station v2</div>
<div class="a tx" style="left:884.6px;top:23.94px;font-size:9.4px;line-height:9.4px;font-weight:normal;color:#404040;transform:scaleX(0.816)">2 of 10</div>
<div class="a tx" style="left:106.5px;top:42.80px;font-size:8.5px;line-height:8.5px;font-weight:normal;color:#2a9ad8;transform:scaleX(0.862)">SOLID</div>
<div class="a tx" style="left:162.5px;top:42.80px;font-size:8.5px;line-height:8.5px;font-weight:normal;color:#505050;transform:scaleX(0.822)">SURFACE</div>
<div class="a tx" style="left:228.5px;top:42.80px;font-size:8.5px;line-height:8.5px;font-weight:normal;color:#505050;transform:scaleX(0.814)">MESH</div>
<div class="a tx" style="left:280.5px;top:42.80px;font-size:8.5px;line-height:8.5px;font-weight:normal;color:#505050;transform:scaleX(0.830)">SHEET METAL</div>
<div class="a tx" style="left:361px;top:42.80px;font-size:8.5px;line-height:8.5px;font-weight:normal;color:#505050;transform:scaleX(0.855)">TOOLS</div>
<div class="a tx" style="left:29.7px;top:64.09px;font-size:8.4px;line-height:8.4px;font-weight:bold;color:#404040;transform:scaleX(0.838)">DESIGN</div>
<div class="a tx" style="left:167.5px;top:85.80px;font-size:8.5px;line-height:8.5px;font-weight:normal;color:#505050;transform:scaleX(0.807)">CREATE</div>
<div class="a tx" style="left:358.3px;top:85.80px;font-size:8.5px;line-height:8.5px;font-weight:normal;color:#505050;transform:scaleX(0.802)">MODIFY</div>
<div class="a tx" style="left:483.9px;top:85.80px;font-size:8.5px;line-height:8.5px;font-weight:normal;color:#505050;transform:scaleX(0.838)">ASSEMBLE</div>
<div class="a tx" style="left:551.3px;top:85.80px;font-size:8.5px;line-height:8.5px;font-weight:normal;color:#505050;transform:scaleX(0.823)">CONSTRUCT</div>
<div class="a tx" style="left:621.8px;top:85.80px;font-size:8.5px;line-height:8.5px;font-weight:normal;color:#505050;transform:scaleX(0.790)">INSPECT</div>
<div class="a tx" style="left:678px;top:85.80px;font-size:8.5px;line-height:8.5px;font-weight:normal;color:#505050;transform:scaleX(0.796)">INSERT</div>
<div class="a tx" style="left:727.2px;top:85.80px;font-size:8.5px;line-height:8.5px;font-weight:normal;color:#505050;transform:scaleX(0.801)">SELECT</div>
<div class="a tx" style="left:20.8px;top:105.22px;font-size:8.6px;line-height:8.6px;font-weight:normal;color:#606060;transform:scaleX(0.827)">BROWSER</div>
<div class="a tx" style="left:69.5px;top:125.44px;font-size:8.1px;line-height:8.1px;font-weight:bold;color:#f8f8f8;transform:scaleX(1.013)">air quality weather station v2</div>
<div class="a tx" style="left:64.8px;top:142.56px;font-size:8.2px;line-height:8.2px;font-weight:normal;color:#333;transform:scaleX(0.921)">Document Settings</div>
<div class="a tx" style="left:65px;top:159.62px;font-size:8.2px;line-height:8.2px;font-weight:normal;color:#333;transform:scaleX(0.947)">Named Views</div>
<div class="a tx" style="left:82.6px;top:176.66px;font-size:8.2px;line-height:8.2px;font-weight:normal;color:#333;transform:scaleX(0.902)">Origin</div>
<div class="a tx" style="left:82.6px;top:193.76px;font-size:8.2px;line-height:8.2px;font-weight:normal;color:#333;transform:scaleX(0.947)">Bodies</div>
<div class="a tx" style="left:82.6px;top:210.76px;font-size:8.2px;line-height:8.2px;font-weight:normal;color:#333;transform:scaleX(0.941)">Sketches</div>
<div class="a tx" style="left:95.7px;top:227.86px;font-size:8.2px;line-height:8.2px;font-weight:normal;color:#333;transform:scaleX(0.909)">Sketch1</div>
<div class="a tx" style="left:95.7px;top:244.96px;font-size:8.2px;line-height:8.2px;font-weight:normal;color:#333;transform:scaleX(0.909)">Sketch2</div>
<div class="a tx" style="left:95.7px;top:261.96px;font-size:8.2px;line-height:8.2px;font-weight:normal;color:#333;transform:scaleX(0.909)">Sketch4</div>
<div class="a tx" style="left:95.7px;top:279.06px;font-size:8.2px;line-height:8.2px;font-weight:normal;color:#333;transform:scaleX(0.909)">Sketch5</div>
<div class="a tx" style="left:95.7px;top:296.06px;font-size:8.2px;line-height:8.2px;font-weight:normal;color:#333;transform:scaleX(0.909)">Sketch6</div>
</body></html>
